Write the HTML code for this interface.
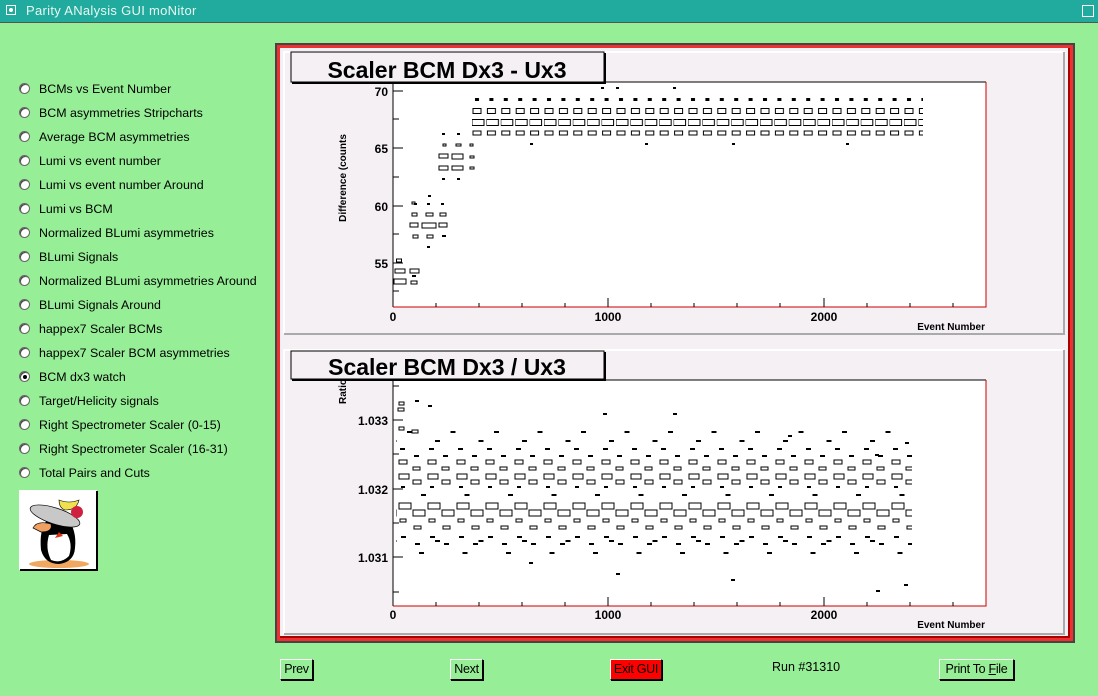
<!DOCTYPE html>
<html><head><meta charset="utf-8">
<style>
html,body{margin:0;padding:0}
body{width:1098px;height:696px;background:#96ee96;position:relative;overflow:hidden;font-family:"Liberation Sans",sans-serif}
.tb{position:absolute;left:0;top:0;width:1098px;height:22px;background:#21aa9e;border-bottom:1px solid #555}
.tb span{position:absolute;left:26px;top:3px;color:#e8f8f0;font-size:13px;letter-spacing:0.3px}
.tb i{position:absolute;left:6px;top:5px;width:10px;height:10px;border:1px solid #fff;box-sizing:border-box}
.tb i:after{content:"";position:absolute;left:2px;top:2px;width:4px;height:4px;border-radius:50%;background:#fff}
.rad{position:absolute;left:19px;font-size:12.4px;color:#000}
.rad b{position:absolute;left:0;top:1px;width:11px;height:11px;border-radius:50%;background:#fff;border:1px solid #666;box-sizing:border-box;box-shadow:inset 1px 1px 0 #444}
.rad b.on:after{content:"";position:absolute;left:3px;top:3px;width:4px;height:4px;border-radius:50%;background:#000}
.rad span{position:absolute;left:20px;top:0;white-space:nowrap}
.btn{position:absolute;top:659px;height:21px;border:1px solid #000;border-top-color:#fff;border-left-color:#fff;box-shadow:1px 1px 0 #000;box-sizing:border-box;font-size:12.5px;line-height:19px;text-align:center;color:#000;background:#96ee96;letter-spacing:-0.3px}
</style></head><body>
<div class="tb"><i></i><span>Parity ANalysis GUI moNitor</span></div>
<div style="position:absolute;right:0;top:0;width:20px;height:22px"><div style="position:absolute;left:4px;top:5px;width:10px;height:10px;border:1px solid #fff"></div></div>

<div class="rad" style="top:82px"><b></b><span>BCMs vs Event Number</span></div>
<div class="rad" style="top:106px"><b></b><span>BCM asymmetries Stripcharts</span></div>
<div class="rad" style="top:130px"><b></b><span>Average BCM asymmetries</span></div>
<div class="rad" style="top:154px"><b></b><span>Lumi vs event number</span></div>
<div class="rad" style="top:178px"><b></b><span>Lumi vs event number Around</span></div>
<div class="rad" style="top:202px"><b></b><span>Lumi vs BCM</span></div>
<div class="rad" style="top:226px"><b></b><span>Normalized BLumi asymmetries</span></div>
<div class="rad" style="top:250px"><b></b><span>BLumi Signals</span></div>
<div class="rad" style="top:274px"><b></b><span>Normalized BLumi asymmetries Around</span></div>
<div class="rad" style="top:298px"><b></b><span>BLumi Signals Around</span></div>
<div class="rad" style="top:322px"><b></b><span>happex7 Scaler BCMs</span></div>
<div class="rad" style="top:346px"><b></b><span>happex7 Scaler BCM asymmetries</span></div>
<div class="rad" style="top:370px"><b class="on"></b><span>BCM dx3 watch</span></div>
<div class="rad" style="top:394px"><b></b><span>Target/Helicity signals</span></div>
<div class="rad" style="top:418px"><b></b><span>Right Spectrometer Scaler (0-15)</span></div>
<div class="rad" style="top:442px"><b></b><span>Right Spectrometer Scaler (16-31)</span></div>
<div class="rad" style="top:466px"><b></b><span>Total Pairs and Cuts</span></div>

<svg style="position:absolute;left:19px;top:490px" width="79" height="81">
<rect x="0.5" y="0.5" width="77" height="79" fill="#fff" stroke="#fff"/>
<path d="M78 1V80H1" stroke="#000" stroke-width="2" fill="none"/>
<ellipse cx="40" cy="74" rx="30" ry="4" fill="#f0a860"/>
<path d="M28 30Q20 40 22 60Q26 74 40 74Q55 72 56 58Q58 40 48 28Z" fill="#000"/>
<path d="M30 45Q26 58 32 70Q42 74 50 66Q54 54 48 44Z" fill="#fff"/>
<path d="M14 38Q18 30 32 34Q34 42 22 42Z" fill="#f0a060" stroke="#000" stroke-width="0.7"/>
<ellipse cx="36" cy="26" rx="26" ry="8" fill="#c8c8c8" stroke="#000" stroke-width="0.7" transform="rotate(18 36 26)"/>
<path d="M40 10Q50 14 60 10Q58 20 46 20Q40 18 40 10Z" fill="#f0e050" stroke="#000" stroke-width="0.6"/>
<circle cx="58" cy="22" r="6" fill="#d02040"/>
<path d="M40 42l-4 6 8-2z" fill="#e03010"/>
</svg>

<div style="position:absolute;left:275px;top:43px;width:800px;height:600px;background:#444"></div>
<div style="position:absolute;left:277px;top:45px;width:796px;height:596px;background:#f03030"></div>
<div style="position:absolute;left:280px;top:48px;width:790px;height:590px;background:#f4f0f4"></div>
<div style="position:absolute;left:1068px;top:48px;width:2px;height:590px;background:#a00"></div>
<div style="position:absolute;left:280px;top:636px;width:790px;height:2px;background:#a00"></div>

<svg style="position:absolute;left:0;top:0" width="1098" height="696" font-family="Liberation Sans, sans-serif">
<defs>
<pattern id="pa" x="472" y="0" width="14.4" height="400" patternUnits="userSpaceOnUse">
<rect x="1" y="108.5" width="8" height="5" fill="none" stroke="#000" stroke-width="1"/>
<rect x="0" y="119.5" width="12" height="6" fill="none" stroke="#000" stroke-width="1"/>
<rect x="1" y="131" width="8" height="4" fill="none" stroke="#000" stroke-width="1"/>
<rect x="3" y="98" width="4" height="3" fill="#000"/>
</pattern>
<pattern id="pb" x="398" y="0" width="29" height="700" patternUnits="userSpaceOnUse">
<rect x="2" y="448" width="5" height="2" fill="#000"/>
<rect x="1" y="460" width="8" height="4" fill="none" stroke="#000"/>
<rect x="1" y="474" width="10" height="5" fill="none" stroke="#000"/>
<rect x="3" y="486" width="4" height="2" fill="#000"/>
<rect x="1" y="503" width="12" height="6" fill="none" stroke="#000"/>
<rect x="2" y="519" width="6" height="3" fill="none" stroke="#000"/>
<rect x="3" y="536" width="5" height="2" fill="#000"/>
<rect x="16" y="455" width="5" height="2" fill="#000"/>
<rect x="15" y="467" width="7" height="3" fill="none" stroke="#000"/>
<rect x="15" y="480" width="8" height="4" fill="none" stroke="#000"/>
<rect x="15" y="510" width="12" height="6" fill="none" stroke="#000"/>
<rect x="16" y="526" width="7" height="3" fill="none" stroke="#000"/>
<rect x="17" y="543" width="5" height="2" fill="#000"/>
</pattern>
<pattern id="pc" x="405" y="0" width="43.5" height="700" patternUnits="userSpaceOnUse">
<rect x="2" y="431" width="5" height="2" fill="#000"/>
<rect x="16" y="494" width="5" height="2" fill="#000"/>
<rect x="30" y="540" width="5" height="2" fill="#000"/>
<rect x="14" y="552" width="5" height="2" fill="#000"/>
<rect x="30" y="440" width="5" height="2" fill="#000"/>
</pattern>
</defs>
<rect x="284" y="52" width="780" height="282" fill="#f4f0f4"/>
<path d="M284 334V52H1064" stroke="#fff" stroke-width="2" fill="none"/>
<path d="M1064 52V334H284" stroke="#aaa" stroke-width="2" fill="none"/>
<rect x="393" y="82" width="593" height="225" fill="#fff"/>
<path d="M393 307V82H986" stroke="#000" fill="none"/>
<path d="M986 82V307H393" stroke="#c00" fill="none"/>
<rect x="472" y="90" width="451" height="50" fill="url(#pa)"/>
<g fill="none" stroke="#000">
<rect x="396.5" y="259" width="5" height="3"/><rect x="395" y="269" width="10" height="4"/><rect x="394" y="279" width="12" height="5"/><rect x="410" y="269" width="9" height="4"/><rect x="411" y="281" width="6" height="3"/>
<rect x="412" y="202" width="3" height="2"/><rect x="412" y="213" width="5" height="3"/><rect x="410" y="223" width="8" height="4"/><rect x="422" y="223" width="14" height="5"/><rect x="439" y="223" width="8" height="4"/><rect x="426" y="213" width="7" height="3"/><rect x="440" y="213" width="6" height="3"/><rect x="413" y="235" width="5" height="3"/><rect x="427" y="235" width="6" height="3"/>
<rect x="439" y="154" width="9" height="4"/><rect x="452" y="154" width="11" height="5"/><rect x="439" y="166" width="9" height="4"/><rect x="452" y="166" width="11" height="4"/><rect x="470" y="156" width="4" height="2"/><rect x="470" y="167" width="4" height="2"/><rect x="443" y="144" width="3" height="2"/><rect x="456" y="144" width="5" height="2"/><rect x="470" y="144" width="3" height="2"/>
</g>
<g fill="#000"><rect x="412" y="275" width="4" height="2"/><rect x="414" y="203" width="3" height="2"/><rect x="427" y="203" width="3" height="2"/><rect x="441" y="203" width="3" height="2"/><rect x="427" y="246" width="3" height="2"/><rect x="442" y="235" width="4" height="2"/><rect x="442" y="178" width="3" height="2"/><rect x="457" y="178" width="3" height="2"/><rect x="442" y="133" width="3" height="2"/><rect x="457" y="133" width="3" height="2"/><rect x="530" y="143" width="3" height="2"/><rect x="645" y="143" width="3" height="2"/><rect x="732" y="143" width="3" height="2"/><rect x="846" y="143" width="3" height="2"/><rect x="601" y="87" width="3" height="2"/><rect x="616" y="87" width="3" height="2"/><rect x="673" y="87" width="3" height="2"/><rect x="428" y="195" width="3" height="2"/></g>
<g stroke="#000"><path d="M393 91h10M393 148h10M393 206h10M393 263h10M393 119h6M393 177h6M393 234h6M393 291h6"/>
<path d="M608 307v-9M824 307v-9M436 307v-4M479 307v-4M522 307v-4M565 307v-4M651 307v-4M694 307v-4M737 307v-4M780 307v-4M867 307v-4M910 307v-4M953 307v-4"/></g>
<g font-weight="bold" font-size="12" fill="#000">
<text x="388" y="96" text-anchor="end">70</text><text x="388" y="153" text-anchor="end">65</text><text x="388" y="211" text-anchor="end">60</text><text x="388" y="268" text-anchor="end">55</text>
<text x="393" y="321" text-anchor="middle">0</text><text x="608" y="321" text-anchor="middle">1000</text><text x="824" y="321" text-anchor="middle">2000</text>
<text x="985" y="330" text-anchor="end" font-size="10">Event Number</text>
<text transform="translate(346 178) rotate(-90)" font-size="10" text-anchor="middle">Difference (counts</text>
</g>
<rect x="291" y="52" width="313" height="30" fill="#f4f0f4" stroke="#000"/>
<path d="M292 83H605V53" stroke="#000" stroke-width="2" fill="none"/>
<text x="447" y="78" text-anchor="middle" font-weight="bold" font-size="23">Scaler BCM Dx3 - Ux3</text>

<rect x="284" y="350" width="780" height="286" fill="#f4f0f4"/>
<path d="M284 634V350H1064" stroke="#fff" stroke-width="2" fill="none"/>
<path d="M1064 350V634H284" stroke="#aaa" stroke-width="2" fill="none"/>
<rect x="393" y="380" width="593" height="226" fill="#fff"/>
<path d="M393 606V380H986" stroke="#000" fill="none"/>
<path d="M986 380V606H393" stroke="#c00" fill="none"/>
<rect x="396" y="440" width="516" height="112" fill="url(#pb)"/>
<rect x="396" y="400" width="516" height="200" fill="url(#pc)"/>
<g fill="none" stroke="#000"><rect x="399" y="402" width="5" height="3"/><rect x="398" y="408" width="6" height="3"/><rect x="399" y="427" width="5" height="3"/><rect x="412" y="430" width="6" height="3"/></g>
<g fill="#000"><rect x="415" y="400" width="4" height="2"/><rect x="428" y="405" width="4" height="2"/><rect x="603" y="413" width="4" height="2"/><rect x="673" y="413" width="4" height="2"/><rect x="788" y="435" width="4" height="2"/><rect x="875" y="454" width="4" height="2"/><rect x="905" y="442" width="4" height="2"/><rect x="731" y="579" width="4" height="2"/><rect x="876" y="590" width="4" height="2"/><rect x="904" y="584" width="4" height="2"/><rect x="616" y="573" width="4" height="2"/><rect x="529" y="562" width="4" height="2"/></g>
<g stroke="#000"><path d="M393 420h10M393 489h10M393 557h10M393 386h6M393 454h6M393 523h6M393 592h6"/>
<path d="M608 606v-9M824 606v-9M436 606v-4M479 606v-4M522 606v-4M565 606v-4M651 606v-4M694 606v-4M737 606v-4M780 606v-4M867 606v-4M910 606v-4M953 606v-4"/></g>
<g font-weight="bold" font-size="12" fill="#000">
<text x="388" y="425" text-anchor="end">1.033</text><text x="388" y="494" text-anchor="end">1.032</text><text x="388" y="562" text-anchor="end">1.031</text>
<text x="393" y="619" text-anchor="middle">0</text><text x="608" y="619" text-anchor="middle">1000</text><text x="824" y="619" text-anchor="middle">2000</text>
<text x="985" y="628" text-anchor="end" font-size="10">Event Number</text>
<text transform="translate(346 404) rotate(-90)" font-size="10">Ratio</text>
</g>
<rect x="291" y="351" width="313" height="28" fill="#f4f0f4" stroke="#000"/>
<path d="M292 380H605V352" stroke="#000" stroke-width="2" fill="none"/>
<text x="447" y="375" text-anchor="middle" font-weight="bold" font-size="23">Scaler BCM Dx3 / Ux3</text>
</svg>

<div class="btn" style="left:280px;width:33px">Prev</div>
<div class="btn" style="left:450px;width:33px">Next</div>
<div class="btn" style="left:610px;width:52px;background:#f00">Exit GUI</div>
<div style="position:absolute;left:772px;top:660px;font-size:12.5px">Run #31310</div>
<div class="btn" style="left:939px;width:75px">Print To <u>F</u>ile</div>
</body></html>
